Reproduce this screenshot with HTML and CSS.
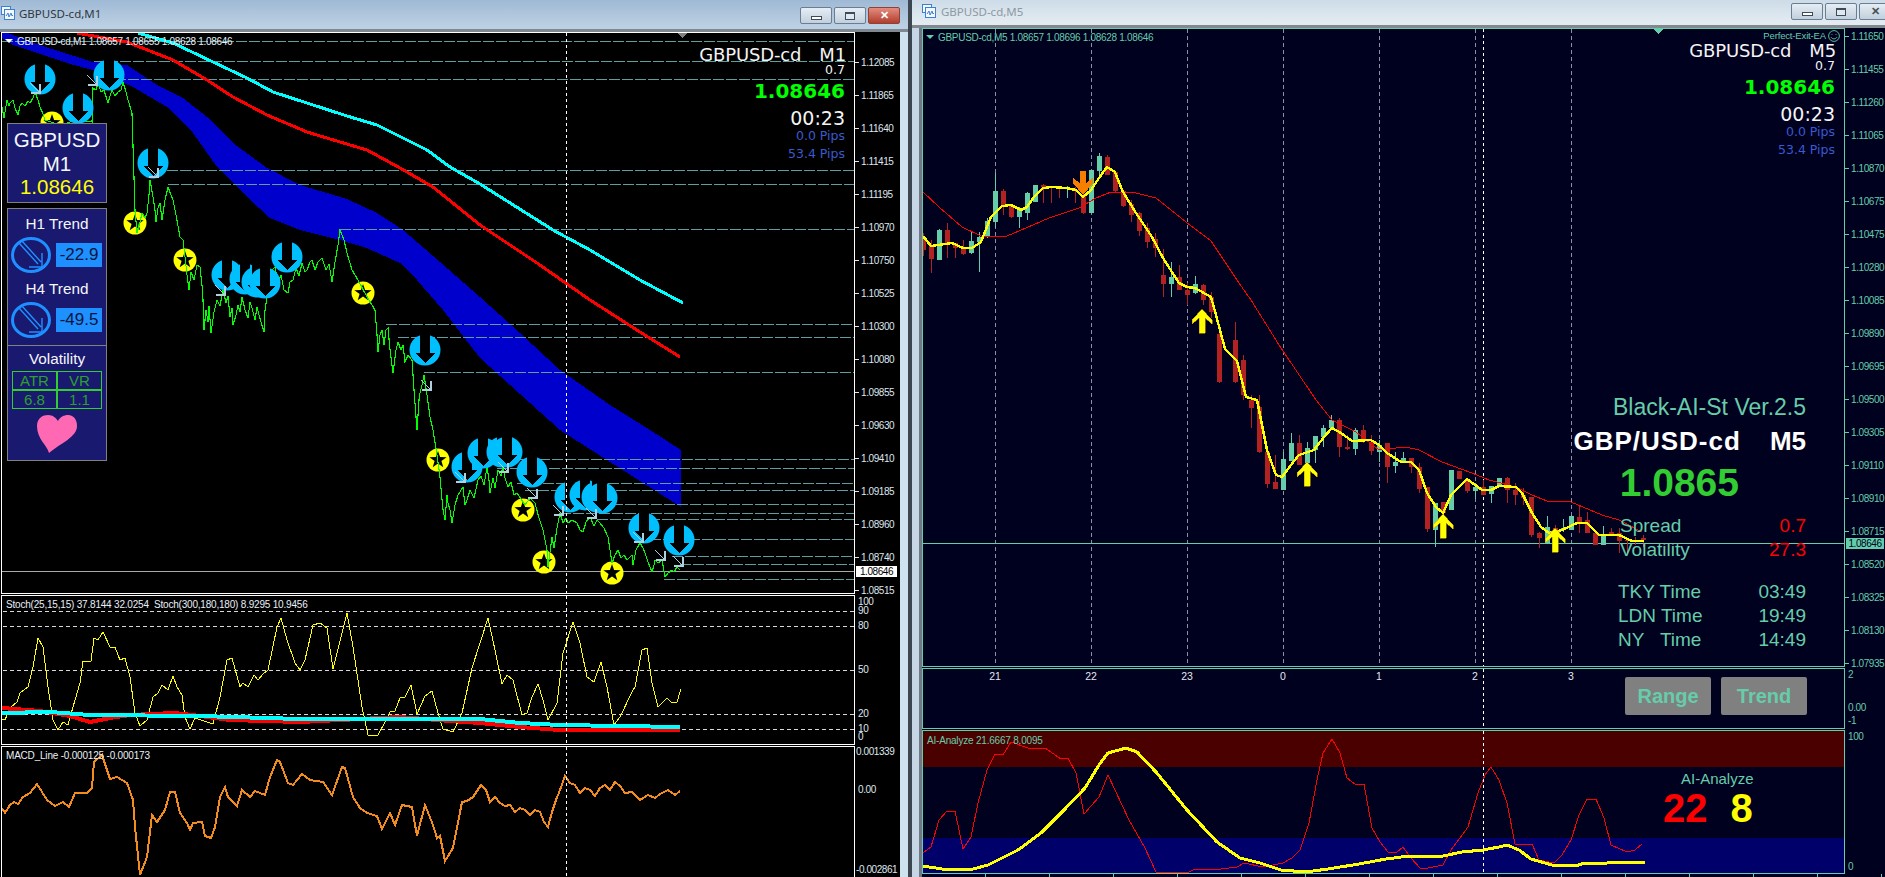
FILE: index.html
```html
<!DOCTYPE html>
<html lang="en">
<head>
<meta charset="utf-8">
<title>GBPUSD-cd charts</title>
<link rel="stylesheet" href="styles.css">
</head>
<body>
<svg class="defs" width="0" height="0" aria-hidden="true">
  <defs>
    <g id="sell"><circle r="15.5" class="sell-disc"/><polygon class="sell-arrow" points="-5,-17 5,-17 5,3 10,3 0,13 -10,3 -5,3"/></g>
    <g id="star"><circle r="11.5" class="star-disc"/><polygon class="star-shape" points="0,-9 2.1,-2.9 8.6,-2.8 3.4,1.1 5.3,7.3 0,3.6 -5.3,7.3 -3.4,1.1 -8.6,-2.8 -2.1,-2.9"/></g>
    <path id="exit" class="exit-arrow" d="M-5-5L4 4M5-4V5H-4"/>
    <polygon id="up" class="up-arrow" points="0,0 10,11 10,15 3,9 3,24 -3,24 -3,9 -10,15 -10,11"/>
  </defs>
</svg>
<div class="desktop">

  <section class="window window-left">
    <header class="titlebar titlebar-active">
      <svg class="app-icon" viewBox="0 0 14 14"><rect x="0.5" y="0.5" width="9" height="8" class="ic-box"/><rect x="3.5" y="3.5" width="10" height="10" class="ic-box"/><path class="ic-line" d="M5 10l2-3 1 4 2-4 1 3 1-1"/></svg>
      <span class="title-text">GBPUSD-cd,M1</span>
      <div class="win-buttons">
        <span class="win-btn"><i class="glyph-min"></i></span>
        <span class="win-btn"><i class="glyph-max"></i></span>
        <span class="win-btn win-close">&#10005;</span>
      </div>
    </header>
    <div class="chart chart-black">
      <div class="pane pane-main-l">
        <div class="plot plot-white">
          <svg class="plot-svg" viewBox="2 33 852 560">
            <polygon class="band" points="8,33 33,43 93,62 127,65 157,85 183,98 207,117 233,143 267,168 300,185 347,199 377,213 403,230 440,262 480,297 520,333 560,370 610,405 650,430 681,450 681,507 610,462 560,430 480,358 443,310 417,280 400,263 367,248 340,240 300,230 270,218 247,197 217,167 193,133 167,107 133,87 100,72 67,63 13,45 2,38 2,33"/>
            <path class="lvl" d="M2 41.5H854M94 61.5H854M115 79.5H854M167 170.5H854M168 184.5H854M340 229.5H854M386 324.5H854M398 337.5H854M424 372.5H854M487 459.5H854M497 468.5H854M517 483.5H854M525 490.5H854M560 504.5H854M560 513.5H854M597 519.5H854M650 539.5H854M672 556.5H854M680 564.5H854M664 579.5H854"/>
            <path class="price-now" d="M2 571.5H854"/>
            <polyline class="ma-red" points="77,33 127,42 173,60 207,80 233,97 267,115 307,132 340,142 367,150 400,168 433,187 480,225 537,263 590,300 640,332 680,357"/>
            <polyline class="ma-cyan" points="138,33 173,43 213,62 247,78 273,92 307,103 347,116 377,125 427,150 450,167 480,184 553,230 590,250 640,280 683,303"/>
            <use href="#star" x="52" y="123"/><use href="#star" x="135" y="223"/><use href="#star" x="185" y="260"/><use href="#star" x="363" y="293"/><use href="#star" x="438" y="460"/><use href="#star" x="523" y="510"/><use href="#star" x="544" y="562"/><use href="#star" x="612" y="573"/>
            <polyline class="price-green" points="2,107 4,118 7,100 9,106 10,103 13,100 15,108 18,115 20,106 22,103 25,106 28,101 30,103 33,98 35,92 38,100 40,107 43,114 45,120 60,125 77,120 92,122 93,88 96,90 98,83 101,92 104,90 108,103 110,96 112,90 115,96 118,92 121,90 123,82 126,92 128,100 132,113 135,210 137,233 140,222 142,213 145,218 147,213 149,195 150,180 153,197 155,210 156,222 158,208 160,203 162,220 165,200 168,187 171,195 173,200 176,215 180,237 183,240 185,257 187,275 189,290 191,272 194,280 197,265 200,267 202,285 203,300 204,330 206,310 208,322 209,306 211,333 214,312 217,300 220,306 223,290 226,303 228,296 230,317 232,308 233,325 236,315 238,305 240,312 242,297 245,310 248,318 250,302 252,308 255,320 257,307 259,315 261,322 264,332 265,310 267,297 270,280 272,270 275,267 278,282 281,275 284,290 288,293 290,282 293,280 296,268 299,276 302,263 305,272 307,270 310,262 312,260 315,270 318,262 322,258 326,270 329,264 332,282 335,262 338,245 340,230 344,240 347,253 352,270 358,280 366,295 375,310 377,335 378,352 380,335 382,330 384,345 386,330 388,328 390,350 393,373 396,350 398,342 401,350 403,345 405,362 408,355 412,360 414,390 417,430 419,400 420,393 422,385 424,375 427,395 430,417 433,430 437,455 440,477 443,510 445,520 447,495 448,503 450,510 452,523 455,505 458,495 463,487 465,505 467,500 470,490 474,498 478,480 481,476 484,485 487,467 489,480 490,493 493,478 495,488 498,470 501,476 503,465 505,478 508,487 511,482 514,495 517,493 525,505 530,498 535,503 539,518 543,530 547,550 548,567 552,537 554,548 557,528 560,513 563,523 566,518 568,523 572,520 577,523 580,530 583,532 586,522 590,517 594,526 597,520 600,523 604,528 608,537 610,550 612,563 615,555 618,550 621,558 624,555 627,560 632,555 633,565 636,550 640,543 643,548 645,553 648,562 652,572 654,565 655,560 658,563 662,560 665,577 668,573 672,570 674,572 677,567 680,570"/>
            <use href="#sell" x="40" y="79"/><use href="#sell" x="78" y="108"/><use href="#sell" x="109" y="75"/><use href="#sell" x="153" y="163"/><use href="#sell" x="227" y="275"/><use href="#sell" x="245" y="279"/><use href="#sell" x="257" y="282"/><use href="#sell" x="265" y="283"/><use href="#sell" x="287" y="257"/><use href="#sell" x="425" y="350"/><use href="#sell" x="467" y="467"/><use href="#sell" x="483" y="453"/><use href="#sell" x="502" y="452"/><use href="#sell" x="507" y="452"/><use href="#sell" x="532" y="472"/><use href="#sell" x="570" y="497"/><use href="#sell" x="585" y="495"/><use href="#sell" x="597" y="497"/><use href="#sell" x="602" y="498"/><use href="#sell" x="644" y="528"/><use href="#sell" x="679" y="540"/>
            <use href="#exit" x="35" y="88"/><use href="#exit" x="92" y="80"/><use href="#exit" x="153" y="172"/><use href="#exit" x="220" y="290"/><use href="#exit" x="426" y="385"/><use href="#exit" x="460" y="477"/><use href="#exit" x="503" y="467"/><use href="#exit" x="532" y="493"/><use href="#exit" x="558" y="510"/><use href="#exit" x="591" y="513"/><use href="#exit" x="638" y="537"/><use href="#exit" x="660" y="555"/><use href="#exit" x="678" y="561"/>
            <path class="cross" d="M566.5 33V593"/>
            <polygon class="grab-gray" points="677,33 687,33 682,38"/>
          </svg>
          <div class="head head-white head-tight"><i class="tri tri-white"></i><span>GBPUSD-cd,M1 1.08657 1.08655 1.08628 1.08646</span></div>
          <div class="readout">
            <div class="ro-title"><span>GBPUSD-cd</span><span>M1</span></div>
            <div class="ro-spread">0.7</div>
            <div class="ro-price">1.08646</div>
            <div class="ro-time">00:23</div>
            <div class="ro-pips">0.0 Pips</div>
            <div class="ro-pips ro-pips-2">53.4 Pips</div>
          </div>
          <aside class="side">
            <div class="side-card side-symbol">
              <div>GBPUSD</div>
              <div>M1</div>
              <div class="side-price">1.08646</div>
            </div>
            <div class="side-card">
              <div class="side-trends">
                <div class="side-h">H1 Trend</div>
                <div class="trend-row">
                  <svg class="trend-icon" viewBox="0 0 40 36"><ellipse cx="20" cy="18" rx="18.5" ry="16.5"/><path d="M8 6L27 27M11 4L30 25M31 16V30H18"/></svg>
                  <span class="trend-val">-22.9</span>
                </div>
                <div class="side-h side-h2">H4 Trend</div>
                <div class="trend-row">
                  <svg class="trend-icon" viewBox="0 0 40 36"><ellipse cx="20" cy="18" rx="18.5" ry="16.5"/><path d="M8 6L27 27M11 4L30 25M31 16V30H18"/></svg>
                  <span class="trend-val">-49.5</span>
                </div>
              </div>
              <div class="side-vol">
                <div class="side-h">Volatility</div>
                <div class="vol-grid">
                  <span>ATR</span><span>VR</span><span>6.8</span><span>1.1</span>
                </div>
                <svg class="heart" viewBox="0 0 40 38"><path d="M12 38C10 30 0 24 0 11C0 3 6 0 11 0C16 0 19 3 21 6C23 2 27 0 31 0C37 0 40 5 40 11C40 22 24 28 12 38Z"/></svg>
              </div>
            </div>
          </aside>
        </div>
        <div class="axis axis-l">
          <span class="tick">1.12085</span><span class="tick">1.11865</span><span class="tick">1.11640</span><span class="tick">1.11415</span><span class="tick">1.11195</span><span class="tick">1.10970</span><span class="tick">1.10750</span><span class="tick">1.10525</span><span class="tick">1.10300</span><span class="tick">1.10080</span><span class="tick">1.09855</span><span class="tick">1.09630</span><span class="tick">1.09410</span><span class="tick">1.09185</span><span class="tick">1.08960</span><span class="tick">1.08740</span><span class="tick">1.08515</span>
          <span class="now-box now-box-l">1.08646</span>
        </div>
      </div>
      <div class="pane pane-stoch">
        <div class="plot plot-white">
          <svg class="plot-svg" viewBox="2 596 852 148">
            <path class="level" d="M3 611.5H854M3 626.5H854M3 670.5H854M3 714.5H854M3 729.5H854"/>
            <polyline class="stoch-y" points="2,719 5,720 10,708 17,702 20,693 28,687 33,667 38,638 43,647 48,687 53,720 58,730 63,722 68,725 73,707 80,683 83,661 91,661 94,638 98,640 103,632 110,647 115,647 120,660 125,658 130,677 135,713 140,726 147,720 153,697 158,693 162,685 168,690 173,676 177,687 182,695 185,717 190,729 195,718 213,724 220,697 227,660 232,658 240,687 243,683 248,687 254,675 258,680 263,674 268,670 277,627 281,618 287,640 295,663 300,670 305,660 313,625 320,623 327,628 333,669 347,613 353,647 362,707 368,735 378,735 385,722 390,712 395,711 400,698 405,697 411,685 417,714 425,696 432,691 440,720 443,729 453,732 462,713 472,668 480,643 488,618 495,650 502,684 507,675 513,680 522,715 527,713 532,697 538,684 543,700 548,720 557,703 563,653 573,622 580,643 587,677 594,682 601,662 607,687 614,725 620,717 632,692 635,687 642,650 647,648 652,683 658,707 667,698 672,703 677,702 681,689"/>
            <polyline class="stoch-red" points="2,708 40,711 70,716 90,722 110,718 130,715 175,713 200,716 230,720 300,722 340,720 400,717 450,721 480,723 520,727 560,730 680,730"/>
            <polyline class="stoch-cyan" points="2,713 50,712 90,715 200,716 300,719 400,719 480,719 520,723 560,725 680,727"/>
            <path class="cross" d="M566.5 596V744"/>
          </svg>
          <div class="head head-white"><span>Stoch(25,15,15) 37.8144 32.0254&nbsp; Stoch(300,180,180) 8.9295 10.9456</span></div>
        </div>
        <svg class="axis-svg axis-svg-l" viewBox="855 595 45 150">
          <text x="858" y="602">100</text><text x="858" y="611">90</text><text x="858" y="626">80</text><text x="858" y="670">50</text><text x="858" y="714">20</text><text x="858" y="729">10</text><text x="858" y="737">0</text>
        </svg>
      </div>
      <div class="pane pane-macd">
        <div class="plot plot-white plot-open">
          <svg class="plot-svg" viewBox="2 747 852 130">
            <polyline class="macd" points="2,808 5,813 10,805 14,802 18,804 23,797 30,793 37,784 47,800 55,806 63,802 69,807 75,793 87,793 92,788 94,762 102,755 110,779 117,777 127,783 133,800 135,827 140,875 147,857 152,815 157,822 165,810 170,792 175,792 180,813 187,823 190,830 193,823 202,822 205,836 211,838 215,827 220,797 225,787 228,797 237,806 242,790 250,797 255,791 265,795 270,777 277,760 280,762 288,783 293,785 302,774 310,780 323,782 332,795 342,767 345,768 353,797 360,808 367,813 377,816 382,829 390,813 395,825 402,805 412,807 417,836 425,805 433,825 437,838 440,836 445,861 453,848 462,802 467,801 473,797 481,785 486,790 490,802 495,797 500,803 505,806 510,805 515,812 520,808 525,810 530,815 535,810 540,812 544,822 548,827 552,812 556,800 560,790 565,776 570,783 575,785 580,793 585,788 590,790 595,796 600,788 605,785 610,790 615,782 620,786 625,793 632,792 640,800 648,795 655,798 660,794 668,790 675,795 680,791"/>
            <path class="cross" d="M566.5 747V877"/>
          </svg>
          <div class="head head-white"><span>MACD_Line -0.000125 -0.000173</span></div>
        </div>
        <svg class="axis-svg axis-svg-l" viewBox="855 746 45 131">
          <text x="856" y="752">0.001339</text><text x="858" y="790">0.00</text><text x="856" y="870">-0.002861</text>
        </svg>
      </div>
    </div>
  </section>

  <div class="window-gap"></div>

  <section class="window window-right">
    <header class="titlebar titlebar-idle">
      <svg class="app-icon" viewBox="0 0 14 14"><rect x="0.5" y="0.5" width="9" height="8" class="ic-box"/><rect x="3.5" y="3.5" width="10" height="10" class="ic-box"/><path class="ic-line" d="M5 10l2-3 1 4 2-4 1 3 1-1"/></svg>
      <span class="title-text title-text-idle">GBPUSD-cd,M5</span>
      <div class="win-buttons win-buttons-idle">
        <span class="win-btn"><i class="glyph-min"></i></span>
        <span class="win-btn"><i class="glyph-max"></i></span>
        <span class="win-btn win-close-idle">&#10005;</span>
      </div>
    </header>
    <div class="chart chart-navy">
      <div class="pane pane-main-r">
        <div class="plot plot-teal">
          <svg class="plot-svg" viewBox="924 29 921 637">
            <path class="grid" d="M996.5 29V666M1092.5 29V666M1188.5 29V666M1284.5 29V666M1380.5 29V666M1476.5 29V666M1572.5 29V666"/>
            <path class="cross" d="M1484.5 29V666"/>
            <path class="price-line" d="M924 543.5H1845"/>
            <g class="candles">
              <path class="wick-red" d="M924 233V256M932 240V273M948 223V258M956 243V258M964 240V255M1004 189V215M1012 205V218M1044 184V203M1052 187V203M1060 187V198M1076 187V203M1084 190V214M1108 155V175M1116 171V193M1124 191V207M1132 200V222M1140 212V236M1148 223V248M1156 233V257M1164 249V297M1180 265V290M1188 283V305M1204 284V305M1212 292V318M1220 330V383M1236 322V383M1244 355V400M1252 395V428M1260 395V453M1268 450V488M1276 455V489M1300 435V465M1340 418V457M1348 435V450M1364 425V443M1372 435V455M1388 443V483M1412 458V473M1420 463V493M1428 487V532M1444 502V517M1460 471V479M1468 479V493M1484 480V495M1508 477V503M1516 483V505M1524 488V505M1532 497V537M1540 532V548M1556 525V543M1580 506V533M1588 512V533M1596 532V545M1612 528V535M1620 528V553M1628 540V553M1636 537V545M1644 535V547"/>
              <path class="body-red" d="M924 238V250M932 246V259M948 230V243M956 243V248M964 248V254M1004 191V206M1012 206V217M1044 185V187M1052 187V188M1060 188V189M1076 190V191M1084 195V213M1108 157V175M1116 172V191M1124 191V206M1132 204V215M1140 213V231M1148 228V242M1156 239V248M1164 275V284M1180 277V290M1188 290V295M1204 285V300M1212 297V312M1220 334V382M1236 340V382M1244 360V395M1252 400V408M1260 407V452M1268 452V484M1276 482V489M1300 443V465M1340 420V447M1348 447V449M1364 430V440M1372 442V451M1388 443V467M1412 458V467M1420 467V489M1428 487V529M1444 502V513M1460 471V479M1468 479V491M1484 487V495M1508 478V490M1516 490V495M1524 495V498M1532 497V535M1540 533V538M1556 528V543M1580 517V522M1588 520V533M1596 533V545M1612 532V534M1620 533V541M1628 540V541M1644 538V540"/>
              <path class="wick-teal" d="M940 229V260M972 232V254M980 232V272M988 218V238M996 173V228M1020 207V228M1028 192V220M1036 185V202M1068 186V198M1092 170V213M1100 153V178M1172 262V297M1196 276V294M1284 452V490M1292 433V461M1308 442V463M1316 436V463M1324 425V447M1332 415V428M1356 428V455M1380 440V462M1396 452V473M1404 452V462M1436 503V547M1452 470V510M1476 483V499M1492 486V503M1500 478V487M1548 516V543M1564 519V532M1572 515V530M1604 526V545"/>
              <path class="body-teal" d="M940 230V260M972 241V253M980 237V242M988 221V237M996 191V222M1020 210V217M1028 193V213M1036 185V202M1068 188V189M1092 170V213M1100 156V171M1172 277V284M1196 284V293M1284 459V490M1292 443V461M1308 448V463M1316 436V450M1324 428V437M1332 420V428M1356 430V449M1380 445V452M1396 462V466M1404 458V462M1436 503V530M1452 470V510M1476 487V491M1492 486V494M1500 478V487M1548 527V543M1564 528V530M1572 516V530M1604 534V545"/>
            </g>
            <polyline class="ma-thin" points="924,192 940,207 963,227 982,236 1008,236 1027,228 1050,218 1080,208 1097,198 1112,192 1137,193 1157,198 1187,222 1212,241 1240,283 1252,300 1280,345 1317,400 1333,420 1357,432 1380,450 1397,448 1407,447 1420,450 1443,462 1473,473 1490,480 1517,487 1533,495 1548,501 1572,502 1603,515 1620,520 1643,532"/>
            <polyline class="ma-yellow" points="924,236 932,246 953,243 964,248 973,248 982,242 992,217 1003,206 1012,205 1022,210 1028,207 1035,197 1044,188 1053,187 1067,188 1077,190 1084,197 1092,190 1100,178 1108,167 1116,172 1124,192 1137,213 1153,237 1164,258 1180,283 1188,287 1196,288 1212,297 1217,315 1226,349 1238,361 1247,397 1258,400 1268,450 1277,475 1283,477 1292,465 1300,455 1315,450 1325,437 1333,428 1342,433 1353,441 1372,440 1380,445 1388,453 1402,462 1412,462 1420,470 1428,493 1437,507 1444,513 1452,495 1468,479 1483,490 1492,490 1500,486 1517,487 1523,493 1533,513 1542,527 1550,533 1563,530 1578,523 1588,523 1600,535 1620,535 1633,541 1645,541"/>
            <use href="#up" x="1203" y="309"/><use href="#up" x="1308" y="462"/><use href="#up" x="1444" y="514"/><use href="#up" x="1556" y="528"/>
            <polygon class="down-arrow" points="1081,171 1087,171 1087,183 1094,178 1094,183 1084,195 1074,183 1074,178 1081,183"/>
            <polygon class="grab-teal" points="1654,29 1664,29 1659,34"/>
          </svg>
          <div class="head head-teal head-tight"><i class="tri tri-teal"></i><span>GBPUSD-cd,M5 1.08657 1.08696 1.08628 1.08646</span></div>
          <div class="ea-tag"><span>Perfect-Exit-EA</span><svg class="smile" viewBox="0 0 12 12"><circle cx="6" cy="6" r="5.4"/><path d="M3 7.2C4.5 9.4 7.5 9.4 9 7.2M4 4.2V5M8 4.2V5"/></svg></div>
          <div class="readout">
            <div class="ro-title"><span>GBPUSD-cd</span><span>M5</span></div>
            <div class="ro-spread">0.7</div>
            <div class="ro-price">1.08646</div>
            <div class="ro-time">00:23</div>
            <div class="ro-pips">0.0 Pips</div>
            <div class="ro-pips ro-pips-2">53.4 Pips</div>
          </div>
          <div class="info">
            <div class="info-ver">Black-AI-St Ver.2.5</div>
            <div class="info-sym"><span class="info-pair">GBP/USD-cd</span><span>M5</span></div>
            <div class="info-price">1.0865</div>
            <div class="info-row info-row-first"><span>Spread</span><span class="info-red">0.7</span></div>
            <div class="info-row"><span>Volatility</span><span class="info-red">27.3</span></div>
            <div class="info-row info-row-gap info-row-time"><span>TKY Time</span><span>03:49</span></div>
            <div class="info-row info-row-time"><span>LDN Time</span><span>19:49</span></div>
            <div class="info-row info-row-time"><span>NY&nbsp;&nbsp; Time</span><span>14:49</span></div>
          </div>
        </div>
        <div class="axis axis-r">
          <span class="tick">1.11650</span><span class="tick">1.11455</span><span class="tick">1.11260</span><span class="tick">1.11065</span><span class="tick">1.10870</span><span class="tick">1.10675</span><span class="tick">1.10475</span><span class="tick">1.10280</span><span class="tick">1.10085</span><span class="tick">1.09890</span><span class="tick">1.09695</span><span class="tick">1.09500</span><span class="tick">1.09305</span><span class="tick">1.09110</span><span class="tick">1.08910</span><span class="tick">1.08715</span><span class="tick">1.08520</span><span class="tick">1.08325</span><span class="tick">1.08130</span><span class="tick">1.07935</span>
          <span class="now-box now-box-r">1.08646</span>
        </div>
      </div>
      <div class="pane pane-mid">
        <div class="plot plot-teal">
          <svg class="plot-svg" viewBox="924 669 921 59">
            <path class="cross" d="M1484.5 669V728"/>
            <g class="time-labels"><text x="996" y="677">21</text><text x="1092" y="677">22</text><text x="1188" y="677">23</text><text x="1284" y="677">0</text><text x="1380" y="677">1</text><text x="1476" y="677">2</text><text x="1572" y="677">3</text></g>
          </svg>
          <div class="modes"><span class="mode-btn">Range</span><span class="mode-btn">Trend</span></div>
        </div>
        <svg class="axis-svg axis-svg-r" viewBox="1846 668 39 61">
          <text x="1849" y="675">2</text><text x="1849" y="708.5">0.00</text><text x="1849" y="721.5">-1</text>
        </svg>
      </div>
      <div class="pane pane-ai">
        <div class="plot plot-teal">
          <svg class="plot-svg" viewBox="924 731 921 142">
            <rect class="zone-red" x="924" y="731" width="921" height="36"/>
            <rect class="zone-blue" x="924" y="838" width="921" height="35"/>
            <polyline class="ai-red" points="924,853 932,847 940,820 948,811 956,811 964,849 972,837 979,803 988,770 996,754 1004,755 1012,742 1029,748 1046,748 1062,759 1069,758 1077,773 1085,814 1100,797 1109,775 1130,820 1146,848 1157,872 1165,873 1190,872 1196,869 1222,869 1238,867 1245,863 1264,867 1284,863 1293,858 1301,850 1310,823 1318,780 1324,753 1333,739 1341,753 1348,778 1356,784 1365,784 1373,828 1381,842 1389,852 1398,852 1404,847 1412,858 1421,868 1429,868 1444,865 1452,850 1469,827 1479,793 1486,775 1492,767 1500,780 1508,803 1516,844 1533,844 1540,860 1555,863 1563,855 1572,840 1580,815 1588,799 1597,799 1605,818 1612,845 1628,852 1636,850 1643,844"/>
            <polyline class="ai-yellow" points="924,866 943,869 974,869 989,865 1019,850 1042,833 1065,810 1086,788 1100,765 1109,753 1127,748 1138,752 1157,772 1188,810 1218,842 1241,858 1261,863 1282,870 1307,872 1329,869 1360,864 1387,859 1410,856 1444,856 1463,852 1484,850 1500,847 1508,845 1520,850 1532,859 1553,865 1577,866 1585,863 1608,863 1612,862 1646,862"/>
            <path class="cross" d="M1484.5 731V873"/>
          </svg>
          <div class="head head-teal head-ai"><span>AI-Analyze 21.6667 8.0095</span></div>
          <div class="ai-read">
            <div class="ai-name">AI-Analyze</div>
            <div class="ai-nums"><span class="ai-a">22</span><span class="ai-b">8</span></div>
          </div>
        </div>
        <svg class="axis-svg axis-svg-r" viewBox="1846 730 39 144">
          <text x="1849" y="737.5">100</text><text x="1849" y="867.5">0</text>
        </svg>
      </div>
      <div class="time-strip"></div>
    </div>
  </section>
</div>
</body>
</html>
```
FILE: styles.css
```css
* { box-sizing: border-box; }
html, body { margin: 0; height: 100%; overflow: hidden; background: #000; }
body { font-family: "Liberation Sans", Arial, sans-serif; }
.defs { position: absolute; }

.desktop { display: flex; width: 1885px; height: 877px; overflow: hidden; }

/* windows */
.window { display: flex; flex-direction: column; height: 877px; }
.window-left { width: 908px; flex: none; background: linear-gradient(90deg, #bcd6ea, #cfe2f0); }
.window-gap { width: 4px; flex: none; background: #3d4650; }
.window-right { flex: 1; min-width: 0; background: #c6d6e4; }

.titlebar { position: relative; display: flex; align-items: center; flex: none; border-bottom: 3px solid #808890; }
.titlebar-active { height: 32px; padding: 0 0 3px 1px; background: linear-gradient(180deg, #9fb9d5, #bcd0e3 90%); }
.titlebar-idle { height: 28px; padding: 0 0 3px 10px; background: linear-gradient(180deg, #cddce8, #e3ebf1 90%); }
.app-icon { width: 14px; height: 14px; flex: none; }
.ic-box { fill: #f4f8fc; stroke: #3d7fd0; stroke-width: 1; }
.ic-line { fill: none; stroke: #3d7fd0; stroke-width: 1; }
.title-text { margin-left: 4px; font: 11.5px "Noto Sans", sans-serif; color: #303840; }
.title-text-idle { margin-left: 5px; color: #8d98a3; }
.win-buttons { position: absolute; right: 8px; top: 7px; display: flex; gap: 2px; }
.win-buttons-idle { right: -6px; top: 3px; }
.win-btn { display: flex; align-items: center; justify-content: center; width: 32px; height: 17px; border: 1px solid #6b7d90; border-radius: 2px; background: linear-gradient(180deg, #e6edf4, #c1cfdd); color: #556; font-size: 11px; }
.win-close { background: linear-gradient(180deg, #e38d7f, #b13d2d); border-color: #8c4236; color: #fff; font-weight: 700; }
.win-close-idle { color: #455; font-weight: 700; }
.glyph-min { display: block; width: 11px; height: 4px; margin-top: 4px; border: 1px solid #3e4a58; background: #fff; }
.glyph-max { display: block; width: 10px; height: 8px; border: 1px solid #3e4a58; border-top-width: 2px; background: #dfe7ef; }

/* chart frames */
.chart { flex: 1; min-height: 0; display: flex; flex-direction: column; }
.chart-black { width: 900px; background: #000; padding-left: 1px; }
.chart-navy { background: #00001f; border-left: 3px solid #6f7985; }
.window-right .chart { margin-left: 7px; }
.pane { display: flex; flex: none; }
.pane-main-l { height: 562px; margin-bottom: 1px; }
.pane-stoch { height: 150px; margin-bottom: 1px; }
.pane-macd { flex: 1; min-height: 0; }
.pane-main-r { height: 639px; margin-bottom: 1px; }
.pane-mid { height: 61px; margin-bottom: 1px; }
.pane-ai { height: 144px; }
.plot { position: relative; flex: none; }
.plot-white { width: 854px; border: 1px solid #fff; }
.plot-open { border-bottom: 0; }
.plot-teal { width: 923px; border: 1px solid #66cdaa; }
.plot-svg { display: block; width: 100%; height: 100%; shape-rendering: crispEdges; }
.time-strip { height: 4px; background: repeating-linear-gradient(90deg, transparent 0 63px, #66cdaa 63px 64px); }

/* overlay: chart header */
.head { position: absolute; left: 3px; top: 2px; display: flex; align-items: center; gap: 4px; height: 12px; font-size: 10px; letter-spacing: -0.2px; white-space: nowrap; }
.head-tight { letter-spacing: -0.3px; }
.head-white { color: #e8f0f8; }
.head-teal { color: #66cdaa; }
.pane-stoch .head, .pane-macd .head { left: 4px; }
.head-ai { left: 4px; top: 3px; }
.tri { display: block; width: 0; height: 0; border: 4px solid transparent; border-bottom: 0; border-top-width: 4px; }
.tri-white { border-top-color: #fff; }
.tri-teal { border-top-color: #66cdaa; }

/* axes */
.axis { position: relative; flex: 1; display: flex; flex-direction: column; color: #dfe6ee; font-size: 10px; letter-spacing: -0.42px; }
.axis-l { padding-top: 14px; }
.axis-r { margin-top: -8px; color: #66cdaa; }
.tick { display: flex; align-items: center; flex: none; gap: 2px; height: 33px; white-space: nowrap; }
.tick::before { content: ""; width: 4px; height: 1px; background: currentColor; }
.now-box { position: absolute; display: flex; align-items: center; justify-content: center; height: 11px; }
.now-box-l { left: 1px; top: 534px; width: 41px; background: #fff; color: #000; }
.now-box-r { left: 1px; top: 518px; width: 38px; background: #66cdaa; color: #00001f; }
.axis-svg { display: block; flex: none; }
.axis-svg-l { width: 45px; height: 100%; }
.axis-svg-r { width: 39px; height: 100%; }
.axis-svg text { font-size: 10px; letter-spacing: -0.42px; dominant-baseline: middle; }
.axis-svg-l text { fill: #dfe6ee; }
.axis-svg-r text { fill: #66cdaa; }

/* series, left chart */
.band { fill: #0000cd; }
.lvl { fill: none; stroke: #5f9ea0; stroke-width: 1; stroke-dasharray: 11 2; }
.price-now { stroke: #a8a8a8; stroke-width: 1; fill: none; }
.ma-red { fill: none; stroke: #f00; stroke-width: 3; }
.ma-cyan { fill: none; stroke: #0ff; stroke-width: 3; }
.price-green { fill: none; stroke: #0f0; stroke-width: 1.1; }
.cross { fill: none; stroke: #fff; stroke-width: 1; stroke-dasharray: 3 3; }
.level { fill: none; stroke: #d8d8d8; stroke-width: 1; stroke-dasharray: 4 3; }
.stoch-y { fill: none; stroke: #ff0; stroke-width: 1; }
.stoch-red { fill: none; stroke: #f00; stroke-width: 4; }
.stoch-cyan { fill: none; stroke: #0ff; stroke-width: 4; }
.macd { fill: none; stroke: #f28c1e; stroke-width: 2; }
.sell-disc { fill: #00bfff; shape-rendering: auto; }
.sell-arrow { fill: #000; }
.star-disc { fill: #ff0; shape-rendering: auto; }
.star-shape { fill: #000; shape-rendering: auto; }
.exit-arrow { fill: none; stroke: #b0d0e0; stroke-width: 1.3; }
.grab-gray { fill: #808080; }
.grab-teal { fill: #66cdaa; }

/* series, right chart */
.grid { fill: none; stroke: #8c90a4; stroke-width: 1; stroke-dasharray: 4 3; }
.price-line { fill: none; stroke: #66cdaa; stroke-width: 1; }
.candles { transform: translateX(0.5px); }
.wick-red, .body-red, .wick-teal, .body-teal { fill: none; }
.wick-red { stroke: #b22222; stroke-width: 1; }
.body-red { stroke: #b22222; stroke-width: 5; }
.wick-teal { stroke: #66cdaa; stroke-width: 1; }
.body-teal { stroke: #66cdaa; stroke-width: 5; }
.ma-thin { fill: none; stroke: #f00; stroke-width: 1; }
.ma-yellow { fill: none; stroke: #ff0; stroke-width: 2.4; }
.up-arrow { fill: #ff0; stroke: #c9a400; stroke-width: 0.6; }
.down-arrow { fill: #f77f00; }
.time-labels text { fill: #e4e8ef; font-size: 10.5px; text-anchor: middle; dominant-baseline: middle; }
.zone-red { fill: #4b0000; }
.zone-blue { fill: #00006b; }
.ai-red { fill: none; stroke: #f00; stroke-width: 1; }
.ai-yellow { fill: none; stroke: #ff0; stroke-width: 3; }

/* overlay: readout */
.readout { position: absolute; top: 11px; right: 9px; display: flex; flex-direction: column; align-items: flex-end; color: #f4f4f4; font-family: "DejaVu Sans", sans-serif; white-space: nowrap; }
.ro-title { display: flex; gap: 18px; height: 21px; line-height: 21px; margin-right: -1px; font-size: 18px; letter-spacing: -0.15px; }
.ro-spread { height: 10px; line-height: 10px; font-size: 12.5px; }
.ro-price { height: 32px; line-height: 32px; font-size: 20px; font-weight: 700; color: #0f0; }
.ro-time { height: 22px; line-height: 22px; font-size: 19px; }
.ro-pips { height: 13px; line-height: 13px; font-size: 12.5px; color: #3a5ad0; }
.ro-pips-2 { height: 23px; line-height: 23px; }

/* overlay: side panel */
.side { position: absolute; left: 5px; top: 90px; display: flex; flex-direction: column; gap: 5px; width: 100px; color: #f4f6fa; text-align: center; }
.side-card { background: #191970; border: 1px solid #808080; }
.side-symbol { height: 80px; padding-top: 4px; font-size: 20.5px; line-height: 23.5px; }
.side-price { color: #ff0; }
.side-trends { padding: 4px 3px 7px; border-bottom: 1px solid #808080; }
.side-h { height: 22px; line-height: 22px; font-size: 15.3px; }
.side-h2 { margin-top: 5px; }
.trend-row { display: flex; align-items: center; gap: 5px; margin-top: 2px; }
.trend-icon { width: 40px; height: 36px; flex: none; }
.trend-icon ellipse { fill: none; stroke: #1e90ff; stroke-width: 3; }
.trend-icon path { fill: none; stroke: #1e90ff; stroke-width: 1.4; }
.trend-val { width: 46px; height: 24px; line-height: 24px; background: #1e90ff; color: #0b1440; font-size: 17px; }
.side-vol { padding: 2px 4px 7px; }
.vol-grid { display: grid; grid-template-columns: 1fr 1fr; gap: 2px; padding: 1px; background: #32cd32; margin-top: 1px; }
.vol-grid span { height: 17px; line-height: 17px; background: #191970; color: #2ca02c; font-size: 15px; }
.heart { display: block; width: 40px; height: 38px; margin: 6px auto 0; }
.heart path { fill: #ff69b4; }

/* overlay: EA tag */
.ea-tag { position: absolute; top: 1px; right: 4px; display: flex; align-items: center; gap: 2px; height: 11px; line-height: 11px; color: #66cdaa; font-size: 9.5px; letter-spacing: -0.15px; }
.smile { width: 12px; height: 12px; }
.smile circle, .smile path { fill: none; stroke: #66cdaa; stroke-width: 0.9; }

/* overlay: info block */
.info { position: absolute; top: 365px; right: 38px; width: 232px; display: flex; flex-direction: column; color: #66cdaa; font-size: 19px; white-space: nowrap; }
.info-ver { height: 26px; line-height: 26px; font-size: 23px; text-align: right; }
.info-sym { display: flex; justify-content: flex-end; gap: 29px; height: 42px; line-height: 42px; color: #fff; font-size: 26px; font-weight: 700; }
.info-pair { letter-spacing: 1px; }
.info-price { height: 42px; line-height: 42px; padding-right: 67px; text-align: right; color: #32cd32; font-size: 39px; font-weight: 700; }
.info-row { display: flex; justify-content: space-between; height: 24px; line-height: 24px; padding-left: 46px; }
.info-row-time { padding-left: 44px; }
.info-row-first { margin-top: 10px; }
.info-row-gap { margin-top: 18px; }
.info-red { color: #f00; }

/* overlay: mode buttons */
.modes { position: absolute; top: 8px; left: 702px; display: flex; gap: 10px; }
.mode-btn { width: 86px; height: 38px; line-height: 38px; border-radius: 2px; background: #808080; color: #66cdaa; font-size: 20px; font-weight: 700; text-align: center; }

/* overlay: AI read-out */
.ai-read { position: absolute; top: 40px; left: 740px; width: 90px; display: flex; flex-direction: column; }
.ai-name { height: 16px; line-height: 16px; padding-left: 18px; color: #66cdaa; font-size: 15px; white-space: nowrap; }
.ai-nums { display: flex; gap: 23px; height: 43px; line-height: 43px; font-size: 40px; font-weight: 700; }
.ai-a { color: #f00; }
.ai-b { color: #ff0; }
```
